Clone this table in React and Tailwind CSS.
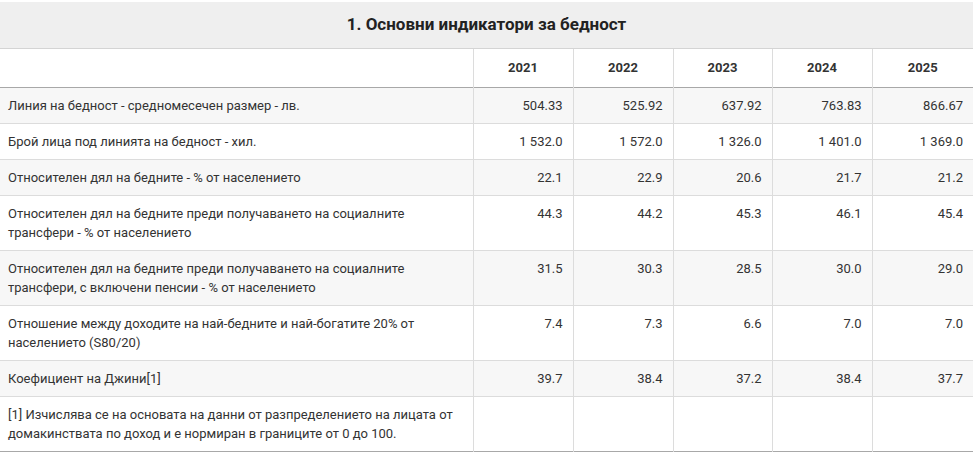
const years = ["2021", "2022", "2023", "2024", "2025"];

const rows = [
  { label: "Линия на бедност - средномесечен размер - лв.", values: ["504.33", "525.92", "637.92", "763.83", "866.67"] },
  { label: "Брой лица под линията на бедност - хил.", values: ["1 532.0", "1 572.0", "1 326.0", "1 401.0", "1 369.0"] },
  { label: "Относителен дял на бедните - % от населението", values: ["22.1", "22.9", "20.6", "21.7", "21.2"] },
  {
    label: "Относителен дял на бедните преди получаването на социалните трансфери - % от населението",
    values: ["44.3", "44.2", "45.3", "46.1", "45.4"],
  },
  {
    label: "Относителен дял на бедните преди получаването на социалните трансфери, с включени пенсии - % от населението",
    values: ["31.5", "30.3", "28.5", "30.0", "29.0"],
  },
  {
    label: "Отношение между доходите на най-бедните и най-богатите 20% от населението (S80/20)",
    values: ["7.4", "7.3", "6.6", "7.0", "7.0"],
  },
  { label: "Коефициент на Джини[1]", values: ["39.7", "38.4", "37.2", "38.4", "37.7"] },
];

export default function App() {
  return (
    <div className="w-[973px] h-[452px] bg-white overflow-hidden font-['Roboto',sans-serif] text-[#333] pt-[2px]">
      <div className="h-[47px] bg-[#efefef] border-b border-[#d4d4d4] flex items-center justify-center">
        <h1 className="text-[17px] font-bold text-[#222]">1. Основни индикатори за бедност</h1>
      </div>
      <table className="w-[973px] table-fixed border-collapse text-[13px] leading-[19px]">
        <colgroup>
          <col className="w-[473px]" />
          <col className="w-[100px]" />
          <col className="w-[100px]" />
          <col className="w-[99px]" />
          <col className="w-[100px]" />
          <col className="w-[101px]" />
        </colgroup>
        <thead>
          <tr className="h-[38px] border-b border-[#a8a8a8]">
            <th className="border-r border-[#dcdcdc]"></th>
            {years.map((y, i) => (
              <th
                key={y}
                className={`font-bold text-[#333] text-center align-middle ${i < 4 ? "border-r border-[#dcdcdc]" : ""}`}
              >
                {y}
              </th>
            ))}
          </tr>
        </thead>
        <tbody>
          {rows.map((r, idx) => (
            <tr key={idx} className={`border-b border-[#dcdcdc] ${idx % 2 === 0 ? "bg-[#f7f7f7]" : "bg-white"}`}>
              <td className="px-[8px] py-[8px] align-top border-r border-[#dcdcdc]">{r.label}</td>
              {r.values.map((v, i) => (
                <td
                  key={i}
                  className={`pl-[8px] pr-[10px] py-[8px] text-right align-top ${i < 4 ? "border-r border-[#dcdcdc]" : ""}`}
                >
                  {v}
                </td>
              ))}
            </tr>
          ))}
          <tr className="border-b border-[#a8a8a8] bg-white">
            <td className="px-[8px] py-[8px] align-top border-r border-[#dcdcdc]">
              [1] Изчислява се на основата на данни от разпределението на лицата от домакинствата по доход и е нормиран в границите от 0 до 100.
            </td>
            <td className="border-r border-[#dcdcdc]"></td>
            <td className="border-r border-[#dcdcdc]"></td>
            <td className="border-r border-[#dcdcdc]"></td>
            <td className="border-r border-[#dcdcdc]"></td>
            <td></td>
          </tr>
        </tbody>
      </table>
    </div>
  );
}
